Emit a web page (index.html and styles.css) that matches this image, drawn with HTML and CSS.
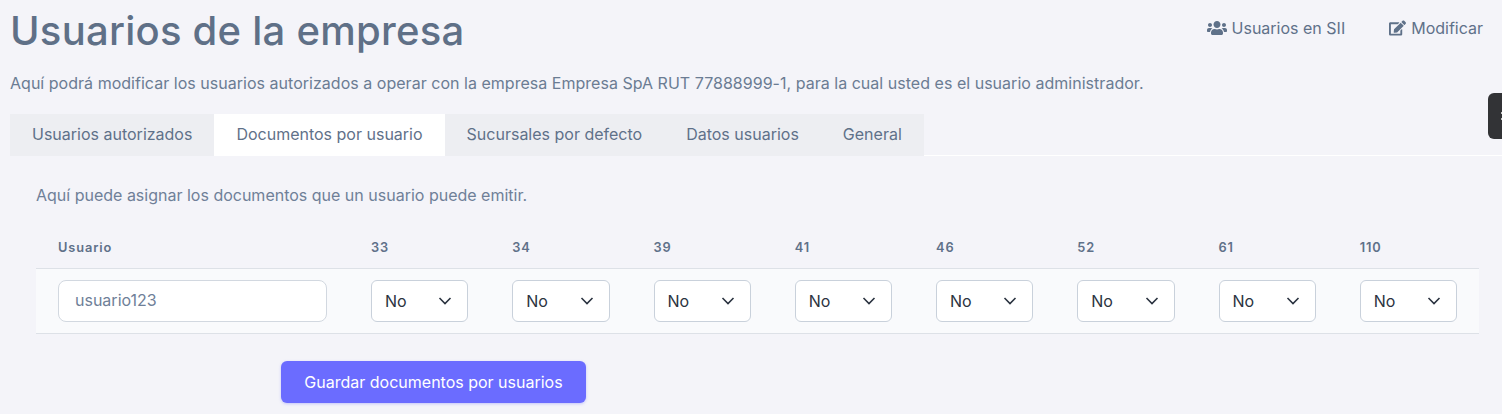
FILE: index.html
```html
<!DOCTYPE html>
<html lang="es">
<head>
    <meta charset="UTF-8">
    <meta name="viewport" content="width=device-width, initial-scale=1.0">
    <title>Usuarios de la empresa</title>
    <link rel="stylesheet" href="styles.css">
</head>
<body>
    <header class="page-header">
        <h1>Usuarios de la empresa</h1>
        <nav class="page-actions">
            <a href="#" class="action">
                <svg class="action-icon" width="20" height="16" viewBox="0 0 640 512" fill="currentColor"><path d="M96 224c35.300 0 64-28.700 64-64s-28.700-64-64-64-64 28.700-64 64 28.700 64 64 64zm448 0c35.300 0 64-28.700 64-64s-28.700-64-64-64-64 28.700-64 64 28.700 64 64 64zm32 32h-64c-17.600 0-33.500 7.100-45.100 18.600 40.300 22.100 68.900 62 75.100 109.400h66c17.700 0 32-14.300 32-32v-32c0-35.300-28.700-64-64-64zm-256 0c61.900 0 112-50.100 112-112S381.900 32 320 32 208 82.100 208 144s50.100 112 112 112zm76.800 32h-8.300c-20.800 10-43.900 16-68.500 16s-47.600-6-68.500-16h-8.300C179.600 288 128 339.600 128 403.200V432c0 26.500 21.500 48 48 48h288c26.500 0 48-21.500 48-48v-28.800c0-63.600-51.600-115.200-115.200-115.200zm-223.700-13.400C161.500 263.100 145.600 256 128 256H64c-35.300 0-64 28.700-64 64v32c0 17.700 14.300 32 32 32h65.900c6.300-47.400 34.900-87.300 75.200-109.400z"/></svg>
                Usuarios en SII
            </a>
            <a href="#" class="action">
                <svg class="action-icon" width="17" height="16" viewBox="0 0 576 512" fill="currentColor"><path d="M402.600 83.200l90.200 90.200c3.800 3.800 3.800 10 0 13.800L274.400 405.600l-92.800 10.300c-12.400 1.400-22.900-9.100-21.500-21.500l10.300-92.800L388.800 83.200c3.800-3.800 10-3.800 13.800 0zm162-22.900l-48.800-48.800c-15.200-15.200-39.900-15.200-55.200 0l-35.400 35.400c-3.800 3.800-3.800 10 0 13.800l90.200 90.200c3.800 3.800 10 3.800 13.800 0l35.400-35.400c15.200-15.300 15.200-40 0-55.200zM384 346.200V448H64V128h229.800c3.200 0 6.200-1.300 8.500-3.500l40-40c7.600-7.600 2.200-20.500-8.500-20.500H48C21.500 64 0 85.500 0 112v352c0 26.500 21.500 48 48 48h352c26.500 0 48-21.500 48-48V306.200c0-10.700-12.900-16-20.500-8.500l-40 40c-2.200 2.300-3.500 5.300-3.500 8.500z"/></svg>
                Modificar
            </a>
        </nav>
    </header>

    <p class="lead">Aquí podrá modificar los usuarios autorizados a operar con la empresa Empresa SpA RUT 77888999-1, para la cual usted es el usuario administrador.</p>

    <ul class="tabs">
        <li class="tab">Usuarios autorizados</li>
        <li class="tab active">Documentos por usuario</li>
        <li class="tab">Sucursales por defecto</li>
        <li class="tab">Datos usuarios</li>
        <li class="tab">General</li>
    </ul>

    <section class="tab-content">
        <p class="help">Aquí puede asignar los documentos que un usuario puede emitir.</p>

        <form>
            <table class="doc-table">
                <thead>
                    <tr>
                        <th class="col-user">Usuario</th>
                        <th>33</th>
                        <th>34</th>
                        <th>39</th>
                        <th>41</th>
                        <th>46</th>
                        <th>52</th>
                        <th>61</th>
                        <th>110</th>
                    </tr>
                </thead>
                <tbody>
                    <tr>
                        <td><input type="text" class="field" value="usuario123"></td>
                        <td><select class="field-select"><option>No</option><option>Si</option></select></td>
                        <td><select class="field-select"><option>No</option><option>Si</option></select></td>
                        <td><select class="field-select"><option>No</option><option>Si</option></select></td>
                        <td><select class="field-select"><option>No</option><option>Si</option></select></td>
                        <td><select class="field-select"><option>No</option><option>Si</option></select></td>
                        <td><select class="field-select"><option>No</option><option>Si</option></select></td>
                        <td><select class="field-select"><option>No</option><option>Si</option></select></td>
                        <td><select class="field-select"><option>No</option><option>Si</option></select></td>
                    </tr>
                </tbody>
            </table>

            <button type="button" class="btn">Guardar documentos por usuarios</button>
        </form>
    </section>

    <div class="side-tab"></div>
</body>
</html>
```

FILE: styles.css
```css
* {
    margin: 0;
    padding: 0;
    box-sizing: border-box;
}

html, body {
    height: 414px;
    overflow: hidden;
}

body {
    font-family: "Inter", "Liberation Sans", sans-serif;
    background: #f4f4f9;
    color: #6b7c93;
    padding: 0 10px;
    position: relative;
}

.page-header {
    display: flex;
    justify-content: space-between;
    align-items: flex-start;
    height: 62px;
    padding-top: 7px;
}

h1 {
    font-size: 40px;
    font-weight: 500;
    line-height: 48px;
    letter-spacing: 0.250px;
    color: #5f7087;
}

.page-actions {
    display: flex;
    gap: 44px;
    padding: 11px 9px 0 0;
}

.action {
    display: flex;
    align-items: center;
    gap: 5px;
    height: 20px;
    font-size: 16px;
    color: #5f7189;
    text-decoration: none;
}

.lead {
    font-size: 16px;
    line-height: 22px;
    letter-spacing: 0.025px;
    color: #6b7c93;
    margin-top: 10px;
}

.tabs {
    display: flex;
    list-style: none;
    height: 42px;
    margin-top: 20px;
    margin-right: -10px;
    border-bottom: 1px solid #ffffff;
}

.tab {
    height: 42px;
    padding: 0 22px;
    background: #edeef2;
    font-size: 16px;
    line-height: 40px;
    color: #5f7189;
}

.tab.active {
    background: #ffffff;
}

.tab-content {
    padding: 0 12px 0 26px;
}

.help {
    font-size: 16px;
    line-height: 22px;
    color: #6f8098;
    margin-top: 28px;
}

.doc-table {
    width: 1443px;
    table-layout: fixed;
    border-collapse: collapse;
    margin-top: 20px;
}

.doc-table th {
    height: 42px;
    padding: 1px 22px 0;
    text-align: left;
    font-size: 12.800px;
    font-weight: 600;
    letter-spacing: 0.900px;
    color: #5f7189;
    border-bottom: 1px solid #dde1e7;
}

.doc-table th.col-user {
    width: 313px;
}

.doc-table td {
    height: 65px;
    padding: 0 22px;
    background: #f9fafc;
    border-bottom: 1px solid #dde1e7;
}

.field, .field-select {
    display: block;
    width: 100%;
    height: 42px;
    background-color: #ffffff;
    border: 1px solid #d2d8e0;
    border-radius: 6px;
    font-family: inherit;
    font-size: 16px;
}

.field {
    padding: 0 16px 2px;
    color: #6f8098;
    border-radius: 8px;
}

.field-select {
    appearance: none;
    padding: 0 0 0 13px;
    color: #2b3340;
    border-color: #c9d1db;
    background-image: url("data:image/svg+xml,%3Csvg xmlns='http://www.w3.org/2000/svg' width='14' height='8' viewBox='0 0 14 8'%3E%3Cpath d='M1.500 1l5.500 5.500L12.500 1' fill='none' stroke='%232b3340' stroke-width='1.600'/%3E%3C/svg%3E");
    background-repeat: no-repeat;
    background-position: right 15px center;
}

.btn {
    display: block;
    width: 305px;
    height: 42px;
    margin: 27px 0 0 245px;
    background: #6b6cff;
    border: none;
    border-radius: 6px;
    color: #ffffff;
    font-family: inherit;
    font-size: 16px;
    font-weight: 400;
    box-shadow: 0 1px 3px rgba(107, 108, 255, 0.35);
}

.side-tab {
    position: absolute;
    top: 93px;
    right: 0;
    width: 14px;
    height: 46px;
    background: #323336;
    border-radius: 6px 0 0 6px;
}

.side-tab::after {
    content: "";
    position: absolute;
    right: 0;
    top: 19px;
    width: 1px;
    height: 2px;
    background: #c8c8c8;
    box-shadow: 0 6px 0 #c8c8c8;
}
```
